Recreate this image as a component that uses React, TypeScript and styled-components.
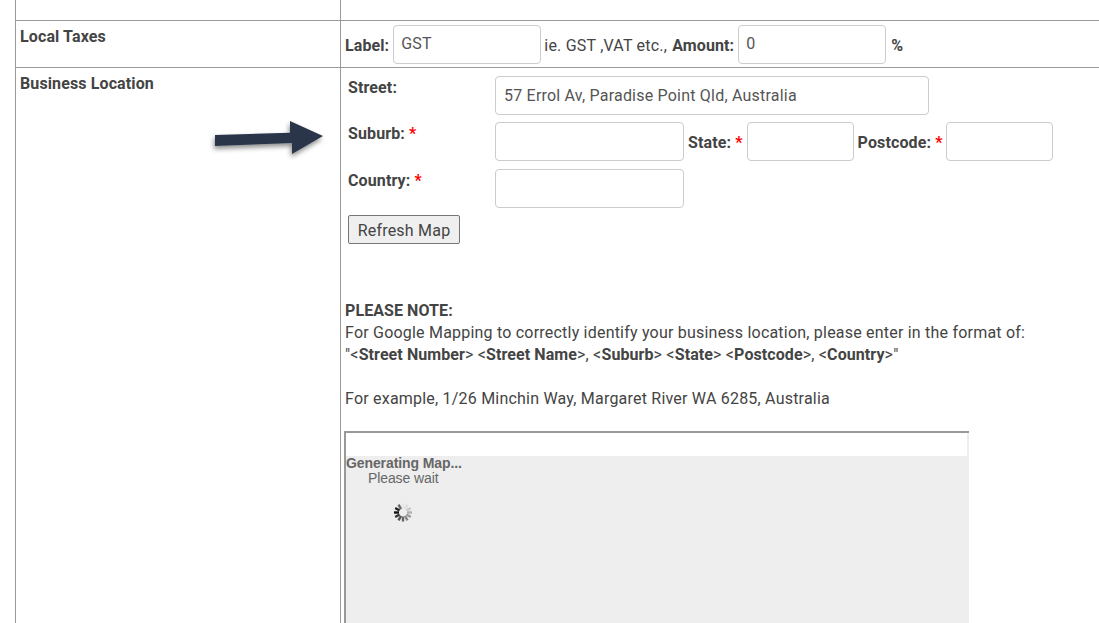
import React from 'react';
import styled, { createGlobalStyle } from 'styled-components';

const GlobalStyle = createGlobalStyle`
  html, body {
    margin: 0;
    padding: 0;
    height: 623px;
    overflow: hidden;
    background: #fff;
  }
  body {
    font-family: Roboto, "Liberation Sans", sans-serif;
    font-size: 16px;
    line-height: 22px;
    letter-spacing: 0.21px;
    color: #444;
  }
`;

const Page = styled.div`
  width: 1099px;
  height: 623px;
  overflow: hidden;
  position: relative;
  padding-left: 15px;
  box-sizing: border-box;
`;

const Sheet = styled.div`
  width: 1084px;
  border-left: 1px solid #999;
  display: grid;
  grid-template-columns: 324px 1fr;
`;

const Head = styled.div<{ $line?: boolean; $h?: number }>`
  padding: 5px 4px 0;
  min-height: ${(p) => p.$h ?? 0}px;
  box-sizing: border-box;
  font-weight: 700;
  letter-spacing: 0.12px;
  border-top: ${(p) => (p.$line ? '1px solid #999' : 'none')};
`;

const Cell = styled.div<{ $line?: boolean; $h?: number }>`
  min-height: ${(p) => p.$h ?? 0}px;
  box-sizing: border-box;
  border-left: 1px solid #999;
  border-top: ${(p) => (p.$line ? '1px solid #999' : 'none')};
`;

const TaxRow = styled.div`
  display: flex;
  align-items: center;
  height: 46px;
  padding-left: 4px;
  white-space: pre;
`;

const TaxText = styled.span<{ $left?: number }>`
  padding-top: 4px;
  margin-left: ${(p) => p.$left ?? 0}px;
`;

const Strong = styled.b`
  font-weight: 700;
  letter-spacing: 0.08px;
`;

const Field = styled.div<{ $w: number; $tax?: boolean }>`
  width: ${(p) => p.$w}px;
  height: 39px;
  box-sizing: border-box;
  border: 1px solid #ccc;
  border-radius: 4px;
  padding: 0 ${(p) => (p.$tax ? 7 : 8)}px;
  line-height: ${(p) => (p.$tax ? 35 : 37)}px;
  color: #555;
  flex: none;
  background: #fff;
`;

const Location = styled.div`
  padding: 8px 0 0 3px;
`;

const AddressGrid = styled.div`
  display: grid;
  grid-template-columns: 147px 1fr;
  row-gap: 7px;
  padding-left: 4px;
`;

const FieldLabel = styled.div<{ $low?: boolean }>`
  font-weight: 700;
  letter-spacing: 0.12px;
  line-height: 22px;
  padding-top: 1px;
  margin-top: ${(p) => (p.$low ? 1 : 0)}px;
`;

const LowField = styled(Field)`
  margin-top: 1px;
`;

const Inline = styled.div`
  display: flex;
  align-items: center;
`;

const InlineLabel = styled.span<{ $wide?: boolean }>`
  font-weight: 700;
  letter-spacing: 0.12px;
  padding: 2px ${(p) => (p.$wide ? '3px' : '4px')} 0 4px;
  white-space: pre;
`;

const Star = styled.span`
  color: #f00;
`;

const RefreshButton = styled.button`
  display: block;
  width: 112px;
  height: 29px;
  margin: 7px 0 0 4px;
  padding: 2px 0 0;
  border: 1px solid #767676;
  border-radius: 2px;
  background: #efefef;
  color: #444;
  font: 16px Roboto, sans-serif;
  letter-spacing: 0.21px;
`;

const Note = styled.div`
  margin-top: 56px;
  padding-left: 1px;
`;

const Spacer = styled.div`
  height: 22px;
`;

const MapFrame = styled.div`
  width: 625px;
  height: 300px;
  margin-top: 21px;
  box-sizing: border-box;
  border-top: 2px solid #999;
  border-left: 2px solid #999;
  display: flex;
  flex-direction: column;
`;

const MapTop = styled.div`
  height: 23px;
  background: #fff;
  border-right: 2px solid #eee;
`;

const MapBody = styled.div`
  flex: 1;
  background: #eee;
  font-family: "Liberation Sans", Arial, sans-serif;
  font-size: 14px;
  line-height: 15px;
  letter-spacing: -0.1px;
  color: #666;
`;

const MapTitle = styled.div`
  font-weight: 700;
`;

const MapWait = styled.div`
  padding-left: 22px;
`;

const SpinnerBox = styled.svg`
  display: block;
  margin: 15px 0 0 46px;
`;

const ArrowMark = styled.svg`
  position: absolute;
  left: 205px;
  top: 110px;
`;

function Spinner() {
  const shades = ['#111', '#333', '#555', '#666', '#888', '#999', '#b0b0b0', '#c8c8c8', '#ddd', '#e4e4e4', '#666', '#222'];
  return (
    <SpinnerBox width="22" height="22" viewBox="0 0 22 22">
      {shades.map((shade, i) => (
        <line
          key={i}
          x1="11"
          y1="2.5"
          x2="11"
          y2="7.5"
          stroke={shade}
          strokeWidth="2.4"
          transform={`rotate(${-90 - i * 30} 11 11.5)`}
        />
      ))}
    </SpinnerBox>
  );
}

export default function App() {
  return (
    <Page>
      <GlobalStyle />
      <Sheet>
        <Head $h={20} />
        <Cell $h={20} />
        <Head $line>Local Taxes</Head>
        <Cell $line>
          <TaxRow>
            <TaxText>
              <Strong>Label: </Strong>
            </TaxText>
            <Field $w={148} $tax>
              GST
            </Field>
            <TaxText $left={-1}> ie. GST ,VAT etc., </TaxText>
            <TaxText $left={1}>
              <Strong>Amount: </Strong>
            </TaxText>
            <Field $w={148} $tax>
              0
            </Field>
            <TaxText $left={5}>
              <Strong>%</Strong>
            </TaxText>
          </TaxRow>
        </Cell>
        <Head $line $h={560}>Business Location</Head>
        <Cell $line $h={560}>
          <Location>
            <AddressGrid>
              <FieldLabel>Street:</FieldLabel>
              <Field $w={434}>57 Errol Av, Paradise Point Qld, Australia</Field>
              <FieldLabel>
                Suburb: <Star>*</Star>
              </FieldLabel>
              <Inline>
                <Field $w={189} />
                <InlineLabel>
                  State: <Star>*</Star>
                </InlineLabel>
                <Field $w={107} />
                <InlineLabel $wide>
                  Postcode: <Star>*</Star>
                </InlineLabel>
                <Field $w={107} />
              </Inline>
              <FieldLabel $low>
                Country: <Star>*</Star>
              </FieldLabel>
              <LowField $w={189} />
            </AddressGrid>
            <RefreshButton>Refresh Map</RefreshButton>
            <Note>
              <Strong>PLEASE NOTE:</Strong>
              <br />
              For Google Mapping to correctly identify your business location, please enter in the format of:
              <br />
              "&lt;<Strong>Street Number</Strong>&gt; &lt;<Strong>Street Name</Strong>&gt;, &lt;<Strong>Suburb</Strong>&gt; &lt;
              <Strong>State</Strong>&gt; &lt;<Strong>Postcode</Strong>&gt;, &lt;<Strong>Country</Strong>&gt;"
              <Spacer />
              For example, 1/26 Minchin Way, Margaret River WA 6285, Australia
            </Note>
            <MapFrame>
              <MapTop />
              <MapBody>
                <MapTitle>Generating Map...</MapTitle>
                <MapWait>Please wait</MapWait>
                <Spinner />
              </MapBody>
            </MapFrame>
          </Location>
        </Cell>
      </Sheet>
      <ArrowMark width="130" height="60" viewBox="0 0 130 60">
        <defs>
          <filter id="arrowShadow" x="-20%" y="-40%" width="140%" height="200%">
            <feDropShadow dx="-1" dy="3" stdDeviation="2.5" floodColor="#000" floodOpacity="0.45" />
          </filter>
        </defs>
        <path
          d="M10 25 L85 22.7 L85 11 L118 26 L87 44 L87 33 L10 36 Z"
          fill="#2a364a"
          filter="url(#arrowShadow)"
        />
      </ArrowMark>
    </Page>
  );
}
